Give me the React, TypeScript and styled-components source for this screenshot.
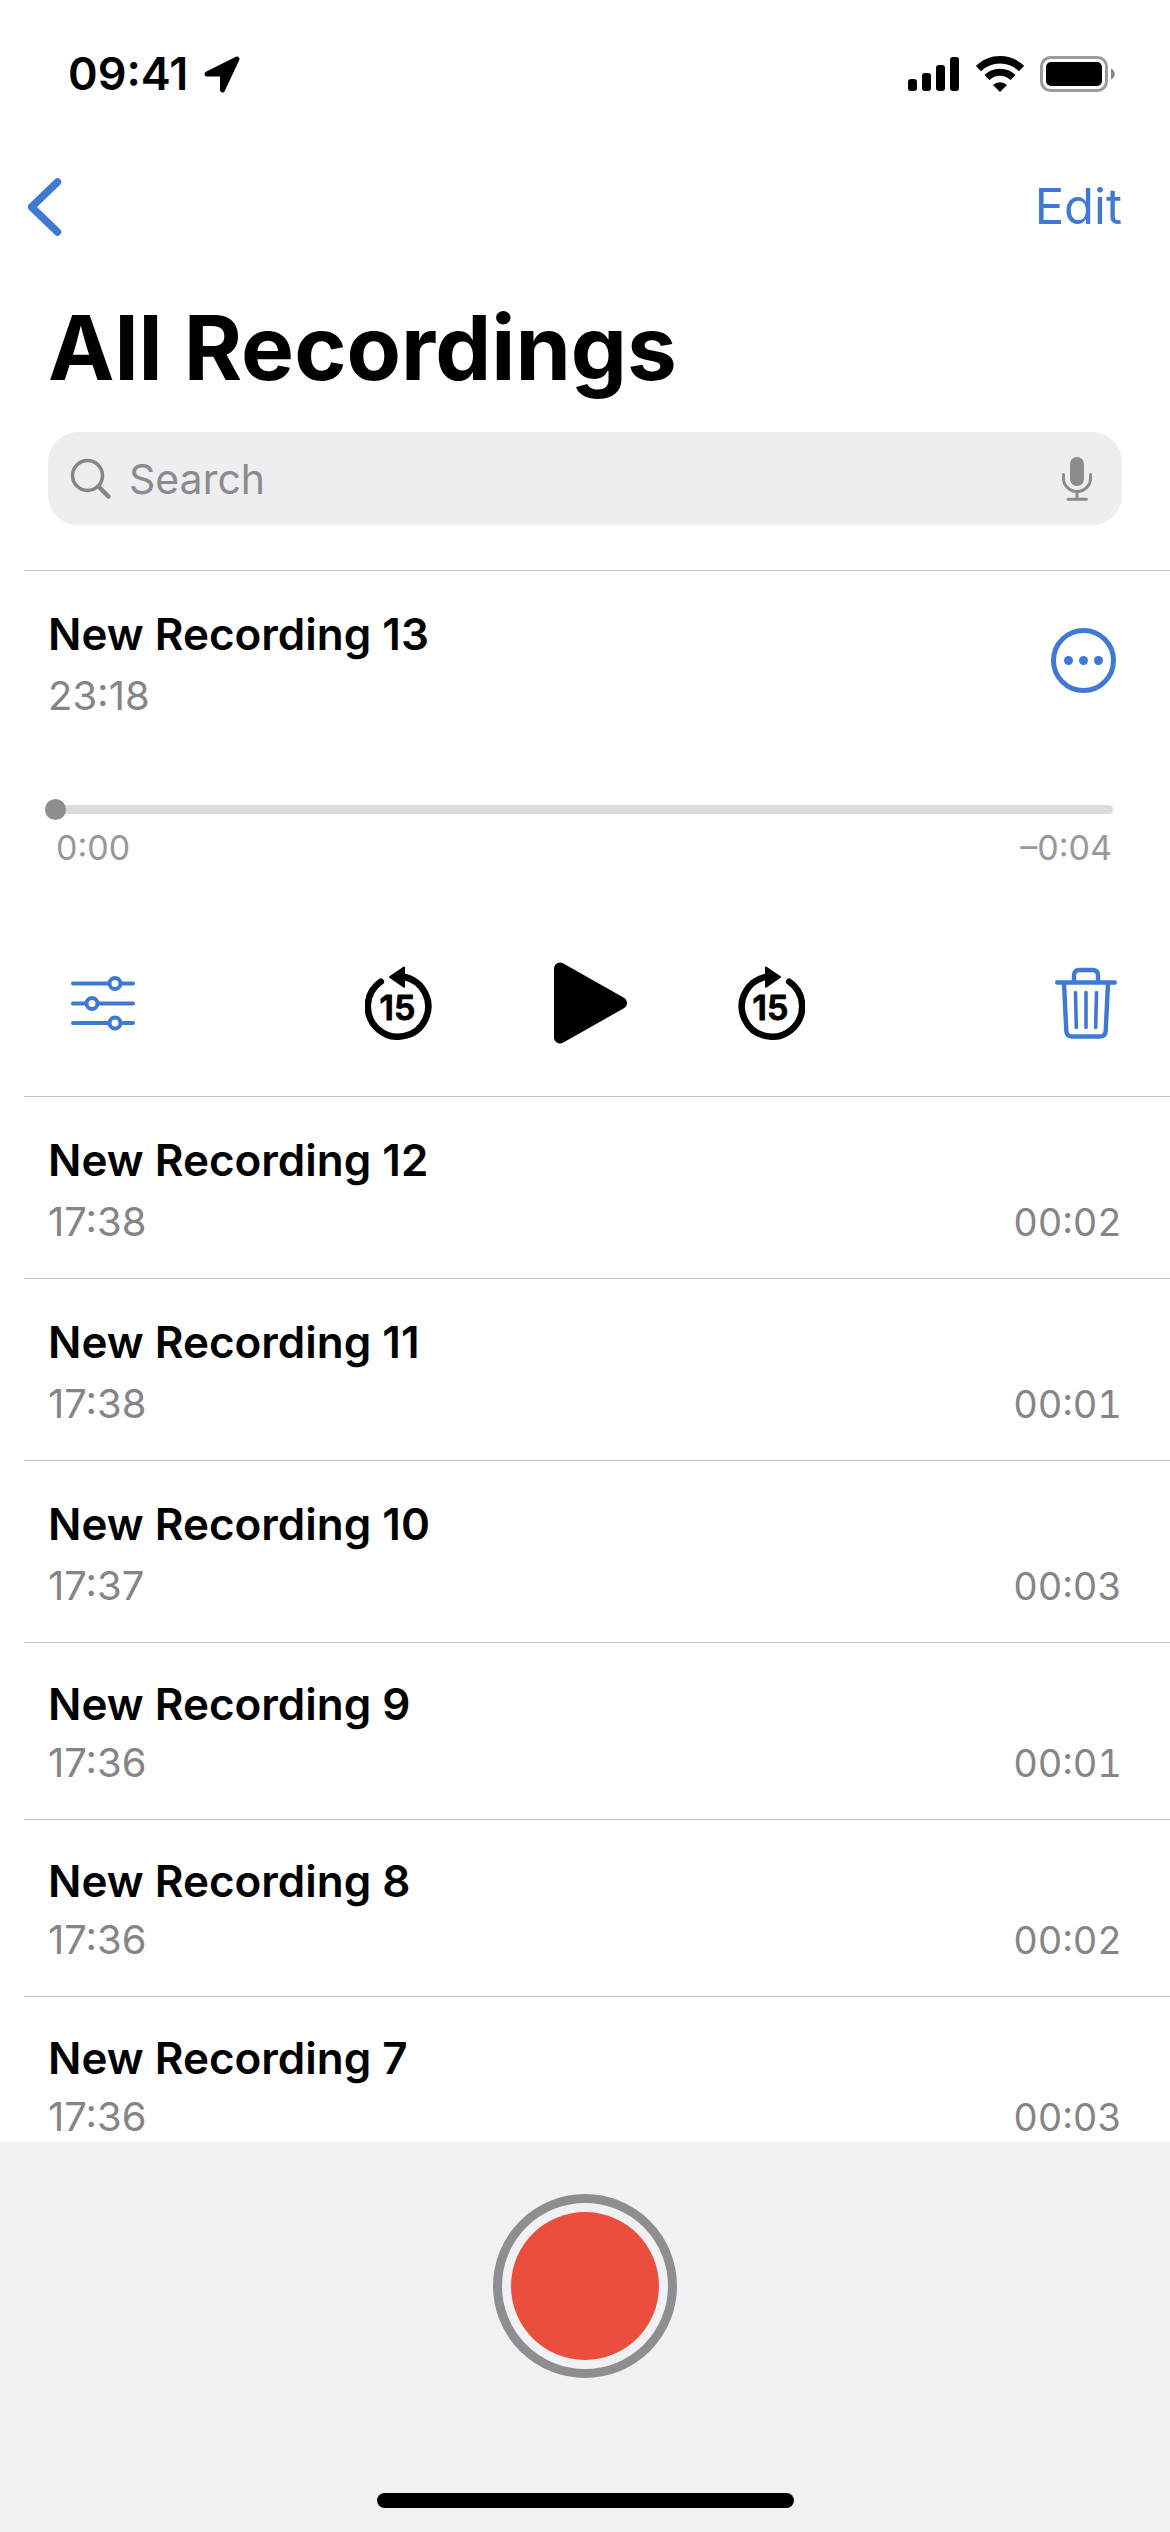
import React, { useState } from "react";
import styled, { createGlobalStyle } from "styled-components";

const blue = "#3f79d3";
const grey = "#858587";
const hairline = "#c4c4c6";

const GlobalStyle = createGlobalStyle`
  *, *::before, *::after { box-sizing: border-box; }
  body {
    margin: 0;
    background: #fff;
    color: #000;
    font-family: Inter, "Liberation Sans", sans-serif;
  }
  h1, h2, p, ul { margin: 0; padding: 0; }
  svg { display: block; flex: none; }
`;

const Screen = styled.div`
  display: flex;
  flex-direction: column;
  height: 100vh;
  overflow: hidden;
`;

const StatusBar = styled.header`
  display: flex;
  flex: none;
  align-items: center;
  justify-content: space-between;
  height: 148px;
  padding: 0 54px 0 68px;
`;

const StatusGroup = styled.div`
  display: flex;
  align-items: center;
  gap: 16px;
`;

const Clock = styled.time`
  font-size: 45px;
  font-weight: 600;
  line-height: 54px;
`;

const NavBar = styled.nav`
  display: flex;
  flex: none;
  align-items: center;
  justify-content: space-between;
  height: 118px;
  padding: 0 48px 0 28px;
`;

const IconButton = styled.button<{ $color?: string; $inset?: number }>`
  display: flex;
  align-items: center;
  padding: 0 ${(p) => p.$inset ?? 0}px;
  border: 0;
  background: none;
  color: ${(p) => p.$color ?? "#000"};
  cursor: pointer;
`;

const TextButton = styled.button`
  padding: 0;
  border: 0;
  background: none;
  color: ${blue};
  font: inherit;
  font-size: 49px;
  line-height: 60px;
  cursor: pointer;
`;

const Title = styled.h1`
  flex: none;
  padding: 27px 48px 29px;
  font-size: 89px;
  font-weight: 700;
  line-height: 110px;
`;

const SearchBox = styled.form`
  display: flex;
  flex: none;
  align-items: center;
  gap: 17px;
  height: 93px;
  margin: 0 48px 45px;
  padding: 0 30px 0 22px;
  border-radius: 30px;
  background: #eeeef0;
  color: ${grey};
`;

const SearchInput = styled.input`
  flex: 1;
  min-width: 0;
  padding: 0;
  border: 0;
  outline: 0;
  appearance: none;
  background: none;
  color: #000;
  font: inherit;
  font-size: 41px;
  line-height: 54px;
  &::placeholder { color: #8b8b8e; opacity: 1; }
`;

const List = styled.ul`
  flex: 1;
  min-height: 0;
  overflow: hidden;
  list-style: none;
`;

const Item = styled.li<{ $compact?: boolean }>`
  margin-left: 24px;
  padding: ${(p) => (p.$compact ? "34px 48px 31px 24px" : "36px 48px 31px 24px")};
  border-top: 1px solid ${hairline};
`;

const OpenItem = styled(Item)`
  padding-bottom: 51px;
`;

const ItemHead = styled.div`
  display: flex;
  align-items: flex-start;
  justify-content: space-between;
  padding-right: 6px;
`;

const MoreButton = styled(IconButton)`
  margin-top: 21px;
`;

const Name = styled.h2<{ $compact?: boolean }>`
  margin-bottom: ${(p) => (p.$compact ? 7 : 10)}px;
  font-size: 44px;
  font-weight: 600;
  line-height: 54px;
`;

const Meta = styled.p`
  display: flex;
  justify-content: space-between;
  color: ${grey};
  font-size: 40px;
  line-height: 50px;
`;

const Length = styled.span`
  font-size: 38px;
  font-variant-numeric: tabular-nums;
`;

const Scrubber = styled.input`
  display: block;
  width: calc(100% - 6px);
  height: 22px;
  margin: 77px 0 8px -3px;
  appearance: none;
  background: none;
  &::-webkit-slider-runnable-track {
    height: 9px;
    border-radius: 5px;
    background: #dcdcdc;
  }
  &::-webkit-slider-thumb {
    width: 21px;
    height: 21px;
    margin-top: -6px;
    border-radius: 50%;
    appearance: none;
    background: #8e8e90;
  }
`;

const Elapsed = styled.div`
  display: flex;
  justify-content: space-between;
  margin-bottom: 93px;
  padding: 0 10px 0 8px;
  color: #98989a;
  font-size: 34px;
  line-height: 40px;
`;

const Controls = styled.div`
  display: grid;
  grid-template-columns: 1fr auto 1fr;
  align-items: center;
  height: 84px;
  padding: 0 5px;
  & > :first-child { justify-self: start; }
  & > :last-child { justify-self: end; }
`;

const Transport = styled.div`
  display: flex;
  align-items: center;
  gap: 111px;
`;

const Footer = styled.footer`
  display: flex;
  flex: none;
  flex-direction: column;
  align-items: center;
  gap: 115px;
  padding: 52px 0 24px;
  background: #f1f0f5;
`;

const RecordButton = styled.button`
  width: 184px;
  height: 184px;
  padding: 9px;
  border: 9px solid #8e8e92;
  border-radius: 50%;
  background: #eb4e3d content-box;
  cursor: pointer;
`;

const HomeIndicator = styled.div`
  width: 417px;
  height: 15px;
  border-radius: 8px;
  background: #000;
`;

const LocationIcon = () => (
  <svg width="36" height="37" viewBox="0 0 36 37" aria-hidden="true">
    <path
      d="M3 18 33 3 18.500 34V18Z"
      fill="#000"
      stroke="#000"
      strokeWidth="5"
      strokeLinejoin="round"
    />
  </svg>
);

const SignalIcon = () => (
  <svg width="52" height="34" viewBox="0 0 52 34" aria-hidden="true">
    <rect x="0" y="22" width="9" height="12" rx="3" />
    <rect x="14" y="16" width="9" height="18" rx="3" />
    <rect x="28" y="8" width="9" height="26" rx="3" />
    <rect x="42" y="0" width="9" height="34" rx="3" />
  </svg>
);

const WifiIcon = () => (
  <svg width="48" height="36" viewBox="0 0 48 36" aria-hidden="true">
    <path d="M2.500 12.500A31 31 0 0 1 45.500 12.500" fill="none" stroke="#000" strokeWidth="7.500" />
    <path d="M11 21.500A18.500 18.500 0 0 1 37 21.500" fill="none" stroke="#000" strokeWidth="7" />
    <path d="M24 36 17 29A10 10 0 0 1 31 29Z" />
  </svg>
);

const BatteryIcon = () => (
  <svg width="76" height="36" viewBox="0 0 76 36" aria-hidden="true">
    <rect x="1.500" y="1.500" width="65" height="33" rx="9" fill="none" stroke="#9b9b9b" strokeWidth="3" />
    <rect x="6" y="6" width="56" height="24" rx="5" />
    <path d="M71 12.500c5 2 5 9 0 11Z" fill="#8a8a8a" />
  </svg>
);

const BackIcon = () => (
  <svg width="34" height="58" viewBox="0 0 34 58" aria-hidden="true">
    <path
      d="M29.500 4 3.500 29 29.500 54"
      fill="none"
      stroke="currentColor"
      strokeWidth="7.500"
      strokeLinecap="round"
      strokeLinejoin="round"
    />
  </svg>
);

const SearchIcon = () => (
  <svg width="42" height="42" viewBox="0 0 42 42" aria-hidden="true">
    <g fill="none" stroke="currentColor" strokeLinecap="round">
      <circle cx="17.500" cy="17.500" r="15" strokeWidth="3.500" />
      <path d="M28.500 28.500 38.500 38.500" strokeWidth="4.500" />
    </g>
  </svg>
);

const MicIcon = () => (
  <svg width="30" height="44" viewBox="0 0 30 44" aria-hidden="true">
    <rect x="8" y="0" width="14" height="29" rx="7" fill="currentColor" />
    <path
      d="M1.500 17.500v4a13.500 13 0 0 0 27 0v-4M15 34.500v7M6 42.300h18.500"
      fill="none"
      stroke="currentColor"
      strokeWidth="3"
      strokeLinecap="round"
    />
  </svg>
);

const MoreIcon = () => (
  <svg width="65" height="65" viewBox="0 0 65 65" aria-hidden="true" fill="currentColor">
    <circle cx="32.500" cy="32.500" r="30" fill="none" stroke="currentColor" strokeWidth="5" />
    <circle cx="17.500" cy="32.500" r="4.500" />
    <circle cx="32.500" cy="32.500" r="4.500" />
    <circle cx="47.500" cy="32.500" r="4.500" />
  </svg>
);

const OptionsIcon = () => (
  <svg width="64" height="56" viewBox="0 0 64 56" aria-hidden="true">
    <g fill="#fff" stroke="currentColor" strokeWidth="4" strokeLinecap="round">
      <path d="M2 8.500H62M2 28.500H62M2 48H62" />
      <circle cx="44" cy="8.500" r="5.500" />
      <circle cx="21" cy="28.500" r="5.500" />
      <circle cx="44" cy="48" r="5.500" />
    </g>
  </svg>
);

const SkipIcon = ({ forward = false }: { forward?: boolean }) => (
  <svg width="67" height="74" viewBox="0 0 67 74" aria-hidden="true">
    <g transform={forward ? "matrix(-1 0 0 1 67 0)" : undefined}>
      <path
        d="M15.800 15.700A30.200 30.200 0 1 0 38 10.700"
        fill="none"
        stroke="#000"
        strokeWidth="6.500"
        strokeLinecap="round"
      />
      <path d="M25 11 39 1.500V20.800Z" stroke="#000" strokeWidth="2" strokeLinejoin="round" />
    </g>
    <text
      x="32.500"
      y="53.500"
      textAnchor="middle"
      fontFamily="Inter, sans-serif"
      fontSize="34"
      fontWeight="600"
      stroke="#000"
      strokeWidth="1"
      strokeLinejoin="round"
    >
      15
    </text>
  </svg>
);

const PlayIcon = () => (
  <svg width="84" height="84" viewBox="0 0 84 84" aria-hidden="true">
    <path
      d="M17 7.500 78 42 17 76.500Z"
      stroke="#000"
      strokeWidth="12"
      strokeLinejoin="round"
    />
  </svg>
);

const TrashIcon = () => (
  <svg width="62" height="72" viewBox="0 0 62 72" aria-hidden="true">
    <g fill="none" stroke="currentColor" strokeLinecap="round" strokeLinejoin="round">
      <path d="M2.200 15.500H59.800" strokeWidth="4.400" />
      <path
        d="M19 14.500V8.500q0-5.500 5.500-5.500h13Q43 3 43 8.500v6M9 16l2.300 48q.3 5.500 5.700 5.500H45q5.400 0 5.700-5.500L53 16"
        strokeWidth="4.400"
      />
      <path d="M20.500 25.500 21.300 60.500M31 25.500V60.500M41.500 25.500 40.700 60.500" strokeWidth="3.600" />
    </g>
  </svg>
);

const recordings = [
  { name: "New Recording 12", time: "17:38", length: "00:02" },
  { name: "New Recording 11", time: "17:38", length: "00:01" },
  { name: "New Recording 10", time: "17:37", length: "00:03" },
  { name: "New Recording 9", time: "17:36", length: "00:01", compact: true },
  { name: "New Recording 8", time: "17:36", length: "00:02", compact: true },
  { name: "New Recording 7", time: "17:36", length: "00:03", compact: true },
];

export default function App() {
  const [position, setPosition] = useState(0);

  return (
    <Screen>
      <GlobalStyle />
      <StatusBar>
        <StatusGroup>
          <Clock>09:41</Clock>
          <LocationIcon />
        </StatusGroup>
        <StatusGroup>
          <SignalIcon />
          <WifiIcon />
          <BatteryIcon />
        </StatusGroup>
      </StatusBar>

      <NavBar>
        <IconButton type="button" aria-label="Back" $color={blue}>
          <BackIcon />
        </IconButton>
        <TextButton type="button">Edit</TextButton>
      </NavBar>

      <Title>All Recordings</Title>

      <SearchBox role="search" onSubmit={(e) => e.preventDefault()}>
        <SearchIcon />
        <SearchInput type="search" aria-label="Search" placeholder="Search" />
        <IconButton type="button" aria-label="Dictate" $color="#8b8b8e">
          <MicIcon />
        </IconButton>
      </SearchBox>

      <List>
        <OpenItem>
          <ItemHead>
            <div>
              <Name>New Recording 13</Name>
              <Meta>23:18</Meta>
            </div>
            <MoreButton type="button" aria-label="More" $color={blue}>
              <MoreIcon />
            </MoreButton>
          </ItemHead>
          <Scrubber
            type="range"
            min={0}
            max={4}
            value={position}
            aria-label="Playback position"
            onChange={(e) => setPosition(Number(e.target.value))}
          />
          <Elapsed>
            <span>0:0{position}</span>
            <span>–0:0{4 - position}</span>
          </Elapsed>
          <Controls>
            <IconButton type="button" aria-label="Options" $color={blue} $inset={18}>
              <OptionsIcon />
            </IconButton>
            <Transport>
              <IconButton type="button" aria-label="Back 15 seconds">
                <SkipIcon />
              </IconButton>
              <IconButton type="button" aria-label="Play">
                <PlayIcon />
              </IconButton>
              <IconButton type="button" aria-label="Forward 15 seconds">
                <SkipIcon forward />
              </IconButton>
            </Transport>
            <IconButton type="button" aria-label="Delete" $color={blue}>
              <TrashIcon />
            </IconButton>
          </Controls>
        </OpenItem>

        {recordings.map((r) => (
          <Item key={r.name} $compact={r.compact}>
            <Name $compact={r.compact}>{r.name}</Name>
            <Meta>
              <span>{r.time}</span>
              <Length>{r.length}</Length>
            </Meta>
          </Item>
        ))}
      </List>

      <Footer>
        <RecordButton type="button" aria-label="Record" />
        <HomeIndicator />
      </Footer>
    </Screen>
  );
}
